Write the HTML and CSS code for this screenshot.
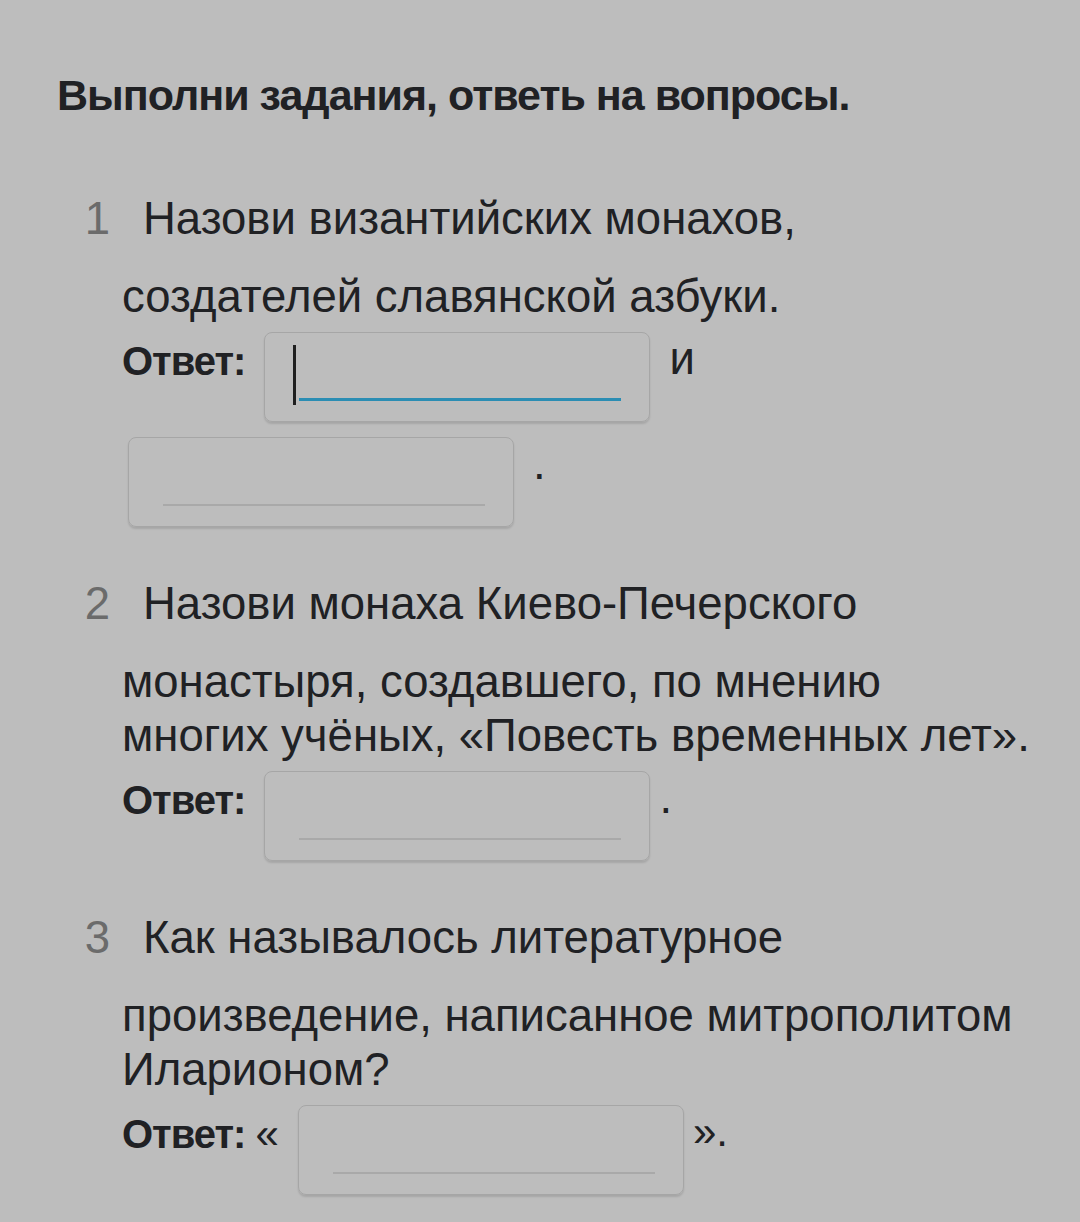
FILE: index.html
```html
<!DOCTYPE html>
<html lang="ru">

<head>
  <meta charset="UTF-8">
  <meta name="viewport" content="width=device-width, initial-scale=1.0">
  <title>Выполни задания</title>
  <link rel="stylesheet" href="styles.css">
</head>

<body>
  <h1 class="title">Выполни задания, ответь на вопросы.</h1>

  <ol class="tasks">
    <li class="task">
      <div class="task-head"><span class="num">1</span><span>Назови византийских монахов,</span></div>
      <p class="task-text">создателей славянской азбуки.</p>
      <div class="answer">
        <b class="label">Ответ:</b>
        <span class="field active"><span class="caret"></span><span class="line"></span></span>
        <span class="word">и</span>
        <span class="field"><span class="line"></span></span>
        <span class="word">.</span>
      </div>
    </li>

    <li class="task">
      <div class="task-head"><span class="num">2</span><span>Назови монаха Киево-Печерского</span></div>
      <p class="task-text">монастыря, создавшего, по мнению<br>многих учёных, «Повесть временных лет».</p>
      <div class="answer">
        <b class="label">Ответ:</b>
        <span class="field"><span class="line"></span></span>
        <span class="word tight">.</span>
      </div>
    </li>

    <li class="task">
      <div class="task-head"><span class="num">3</span><span>Как называлось литературное</span></div>
      <p class="task-text">произведение, написанное митрополитом<br>Иларионом?</p>
      <div class="answer">
        <b class="label">Ответ: <span class="quote">«</span></b>
        <span class="field"><span class="line"></span></span>
        <span class="word tight quote">».</span>
      </div>
    </li>
  </ol>
</body>

</html>
```

FILE: styles.css
```css
body {
  margin: 0;
  padding: 67px 0 0 57px;
  background-color: #bdbdbd;
  color: #202124;
  font-family: "Liberation Sans", Roboto, sans-serif;
  min-height: 1222px;
  box-sizing: border-box;
}

.title {
  margin: 0 0 69px;
  font-size: 43px;
  line-height: 56px;
  font-weight: bold;
  letter-spacing: -1px;
}

.tasks {
  list-style: none;
  margin: 0;
  padding: 0 0 0 65px;
  font-size: 45.5px;
  line-height: 54px;
}

.task {
  margin-bottom: 50px;
}

.task-head {
  display: flex;
  gap: 35px;
  margin-left: -42px;
}

.num {
  width: 28px;
  text-align: right;
  color: #6b6b6b;
  letter-spacing: -2px;
}

.task-text {
  margin: 24px 0 0;
}

.answer {
  display: flex;
  flex-wrap: wrap;
  align-items: flex-start;
  column-gap: 13px;
  row-gap: 15px;
  margin-top: 8px;
}

.label {
  padding-top: 2px;
  font-size: 40px;
  font-weight: bold;
  letter-spacing: -1px;
}

.quote {
  font-size: 42px;
  font-weight: normal;
  letter-spacing: 0;
}

.word.tight {
  margin-left: -10px;
}

.field {
  display: flex;
  align-items: flex-end;
  box-sizing: border-box;
  width: 386px;
  height: 90px;
  margin: 0 6px;
  padding: 14px 28px 20px 34px;
  border: 1.5px solid #a6a6a6;
  border-radius: 8px;
  box-shadow: 0 2px 2px rgba(0, 0, 0, 0.12);
}

.field .line {
  flex: 1;
  height: 2px;
  background-color: #a9a9a9;
}

.field.active {
  padding-left: 28px;
  padding-bottom: 16px;
}

.field.active .caret {
  width: 3px;
  height: 60px;
  background-color: #1f1f1f;
}

.field.active .line {
  height: 3px;
  margin-left: 3px;
  margin-bottom: 4px;
  background-color: #2b8db3;
}
```
